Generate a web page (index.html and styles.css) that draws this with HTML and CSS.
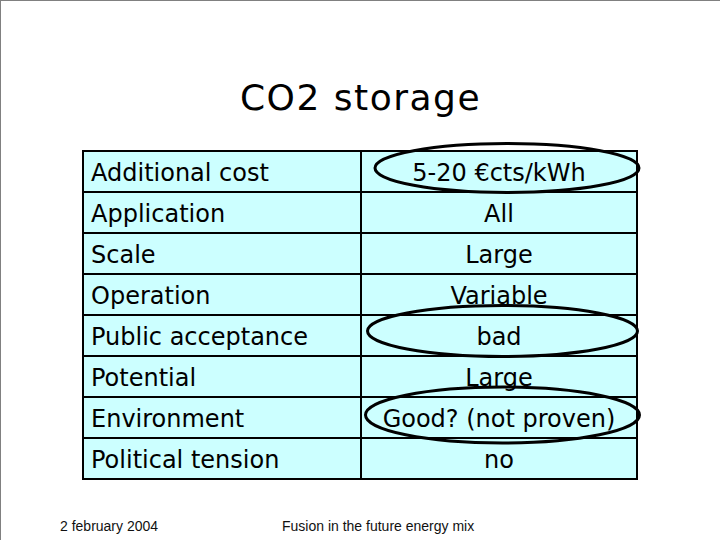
FILE: index.html
```html
<!DOCTYPE html>
<html>
<head>
<meta charset="utf-8">
<link rel="stylesheet" href="styles.css">
</head>
<body>
<div class="slide">
  <h1 class="title">CO2 storage</h1>
  <div class="table-wrap">
    <table class="compare">
      <tr><td class="label">Additional cost</td><td class="value">5-20 €cts/kWh</td></tr>
      <tr><td class="label">Application</td><td class="value">All</td></tr>
      <tr><td class="label">Scale</td><td class="value">Large</td></tr>
      <tr><td class="label">Operation</td><td class="value">Variable</td></tr>
      <tr><td class="label">Public acceptance</td><td class="value">bad</td></tr>
      <tr><td class="label">Potential</td><td class="value">Large</td></tr>
      <tr><td class="label">Environment</td><td class="value">Good? (not proven)</td></tr>
      <tr><td class="label">Political tension</td><td class="value">no</td></tr>
    </table>
    <svg class="marks" width="720" height="540" viewBox="0 0 720 540">
      <ellipse cx="507" cy="168" rx="132" ry="24.5" />
      <ellipse cx="502.5" cy="331" rx="135" ry="25.5" />
      <ellipse cx="502.5" cy="415" rx="137" ry="28" />
    </svg>
  </div>
  <footer class="foot">
    <span class="date">2 february 2004</span>
    <span class="event">Fusion in the future energy mix</span>
  </footer>
</div>
</body>
</html>
```
FILE: styles.css
```css
html, body {
  margin: 0;
  padding: 0;
  background: #ffffff;
}
.slide {
  position: relative;
  width: 719px;
  height: 539px;
  border-top: 1px solid #808080;
  border-left: 1px solid #808080;
  background: #ffffff;
  display: flex;
  flex-direction: column;
  font-family: "DejaVu Sans", Verdana, sans-serif;
  color: #000;
}
.title {
  margin: 76px 0 0 0;
  font-size: 36px;
  font-weight: normal;
  line-height: 41px;
  letter-spacing: 1.5px;
  text-align: center;
}
.table-wrap {
  margin: 32px 0 0 81px;
}
.compare {
  border-collapse: collapse;
  background: #ccffff;
  border: 2px solid #000;
  font-size: 24px;
}
.compare td {
  border: 2px solid #000;
  height: 39px;
  padding: 3px 0 0 0;
  box-sizing: border-box;
  line-height: 28px;
  white-space: nowrap;
}
.compare tr {
  height: 41px;
}
.label {
  width: 278px;
  padding-left: 7px !important;
  text-align: left;
}
.value {
  width: 276px;
  text-align: center;
}
.marks {
  position: absolute;
  left: -1px;
  top: -1px;
  pointer-events: none;
}
.marks ellipse {
  fill: none;
  stroke: #000;
  stroke-width: 3;
}
.foot {
  margin-top: auto;
  height: 22px;
  display: flex;
  font-family: "Liberation Sans", Arial, sans-serif;
  font-size: 14px;
  color: #111;
}
.date {
  margin-left: 59px;
  width: 222px;
}
```
